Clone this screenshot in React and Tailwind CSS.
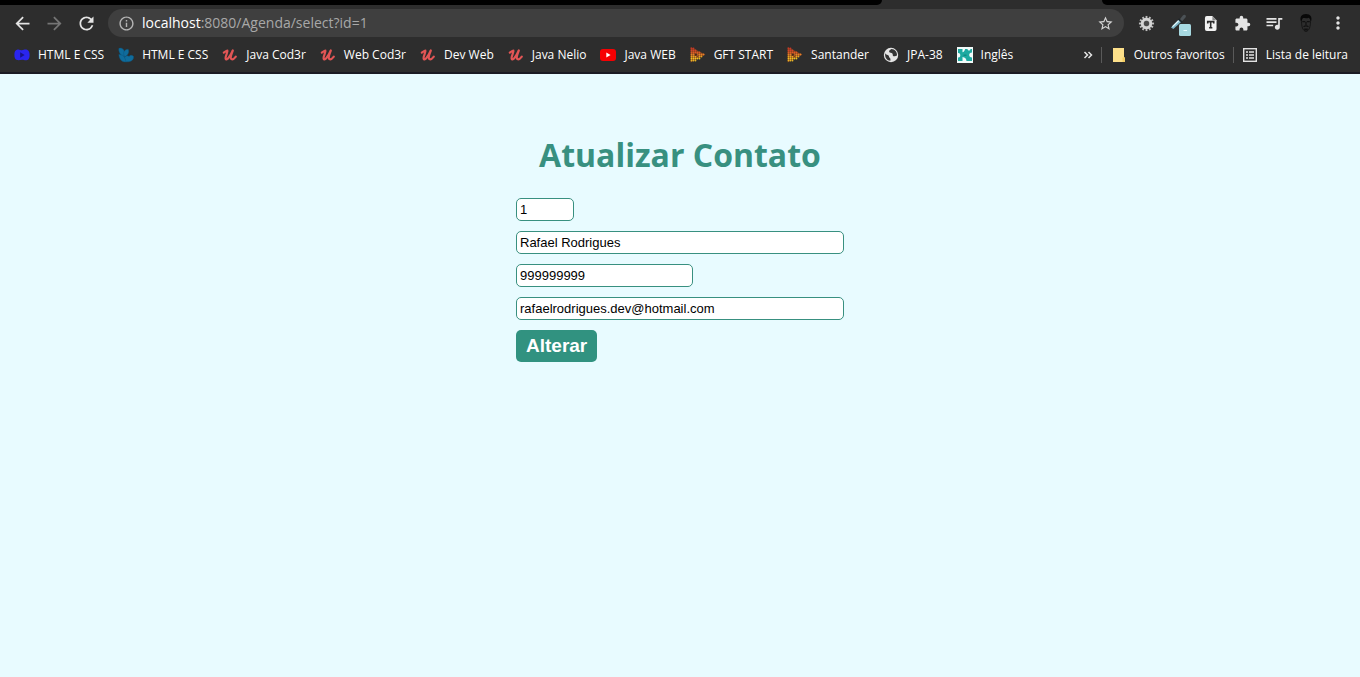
import { useState } from "react";
import {
  MdArrowBack,
  MdArrowForward,
  MdRefresh,
  MdInfoOutline,
  MdStarBorder,
  MdExtension,
  MdQueueMusic,
  MdMoreVert,
} from "react-icons/md";

function PlayBlob() {
  return (
    <svg viewBox="0 0 16 16" className="size-4">
      <path d="M3.500 2.500C5 2 6.500 3.200 8 3.200S11 2 13 2.700c2 .8 2.600 2.500 2.600 5.300s-.6 4.800-3 5.300c-1.600.3-3-.6-4.600-.6s-3 .8-4.800.4C1 12.500.4 10.700.4 8S.8 3.200 3.500 2.500z" fill="#2a25ee" />
      <path d="M6.200 5.200 10.600 8l-4.400 2.800z" fill="#17128a" />
    </svg>
  );
}

function Leaves() {
  return (
    <svg viewBox="0 0 16 16" className="size-4">
      <g fill="#0f6c9c" stroke="#0b5580" strokeWidth=".4">
        <path d="M.8 1.500C3 .4 5 1.400 6 3.600c.6 1.800.6 4-.2 6.200C2.800 8.800.4 5 .8 1.500z" />
        <path d="M5.600 6C6 3.800 7.500 2.200 10.200 2.200c1.200 2.600.4 5.600-3.800 8z" />
        <path d="M.8 7.500c4 0 6.500 2 7.700 7.300-4.300.8-7.200-2.300-7.700-7.300z" />
        <path d="M6.600 10.500C8.500 7.500 10.500 9 11 9.500c1-1.500 3-1.800 4.500-.2.700 3-2 6-7.400 5.500z" />
      </g>
    </svg>
  );
}

function Script() {
  return (
    <svg viewBox="0 0 16 16" className="size-4" fill="none" strokeLinecap="round" strokeLinejoin="round">
      <path d="M1.800 5.600C3.200 4.600 4.600 3.400 5.400 3.500 6.200 4.400 3 9.400 3.600 11.600c.7 2.200 3.900-.6 7.200-8.100C9 8 8 11.200 9.400 12.100c1.400.7 3.200-.8 4.400-2.400" stroke="#e25555" strokeWidth="2.200" />
    </svg>
  );
}

function Tube() {
  return (
    <svg viewBox="0 0 16 16" className="size-4">
      <rect x="0" y="2" width="16" height="12" rx="3" fill="#f60002" />
      <path d="M6.300 5.500 10.600 8l-4.300 2.500z" fill="#fff" />
    </svg>
  );
}

const dotRows = [
  { y: 1.5, xs: [1.5, 3.5], color: "#c73728" },
  { y: 3.5, xs: [1.5, 3.5, 5.5], color: "#d2432a" },
  { y: 5.5, xs: [1.5, 3.5, 5.5, 7.5, 9.5], color: "#dc5826" },
  { y: 7.5, xs: [1.5, 3.5, 7.5, 9.5, 11.5, 13.5], color: "#e4802a" },
  { y: 9.5, xs: [1.5, 3.5, 5.5, 9.5, 11.5], color: "#e8a522" },
  { y: 11.5, xs: [1.5, 3.5, 5.5, 7.5, 9.5], color: "#eec022" },
  { y: 13.5, xs: [1.5, 3.5, 5.5], color: "#e8b426" },
];

function DottedPlay() {
  return (
    <svg viewBox="0 0 16 16" className="size-4">
      <path d="M.6 0 15.400 7.600.6 15.400z" fill="#80401e" />
      {dotRows.map(({ y, xs, color }) =>
        xs.map((x) => <circle key={`${x}-${y}`} cx={x} cy={y} r=".9" fill={color} />)
      )}
      <path d="M5 6.500 8 7.800 5 9z" fill="#46281c" />
    </svg>
  );
}

function Globe() {
  return (
    <svg viewBox="0 0 16 16" className="size-4">
      <circle cx="8" cy="8" r="7.200" fill="#e4e4e4" />
      <path d="M2.300 6.300c.8 1.500 2.300 1.600 3.200 2.200.8.700.2 1.500.9 2.100.8.600 1.300 1.300 1 3.200-3.300-.1-6-3.200-5.100-7.500zM8.400 2c-1.500.9-2.600 1.700-2.200 3 .5 1.200 2.300.5 3.200 1.500.8.900-.2 2 1 2.700 1.400.6 2.500-.6 3.600-.7C14.300 5 11.900 2 8.400 2z" fill="#343434" />
    </svg>
  );
}

function Puzzle() {
  return (
    <svg viewBox="0 0 16 16" className="size-4">
      <rect width="16" height="16" fill="#f2fbfa" />
      <path d="M1 2h4.500v3.300c1.200-.2 2.200-1.300 2.600-3.300h2.400c.2 1 .7 1.600 1.500 1.600s1.300-.6 1.500-1.600H15v3.500c-1.800.2-2.800 1.200-2.800 2.500s1 2.300 2.800 2.500V14H9.500c-.2-2-1.300-3.500-4-3.900V14H1v-3.500c1.300.3 2.300-.6 2.300-2.200S2.300 5.800 1 6z" fill="#1eaaa1" />
      <path d="M6.500 8.200h3" stroke="#0f857d" strokeWidth="1.200" />
    </svg>
  );
}

function Gear() {
  return (
    <svg viewBox="0 0 18 18" className="size-[17px]">
      <g fill="#bdbdbd">
        {[0, 30, 60, 90, 120, 150].map((a) => (
          <rect key={a} x="8" y="1" width="2" height="16" transform={`rotate(${a} 9 9)`} />
        ))}
      </g>
      <circle cx="9" cy="9" r="4.600" fill="none" stroke="#d5d5d5" strokeWidth="2.800" />
      <circle cx="9" cy="9" r="2.800" fill="#4a4a4a" />
    </svg>
  );
}

function Picker() {
  return (
    <svg viewBox="0 0 22 24" className="mt-1 ml-1.5 h-6 w-[22px] shrink-0">
      <path d="M9 7.500 12.800 2.500c1-1 2.700-.9 3 .2.300.8-.1 1.500-.8 2.200L11 9.500z" fill="#4b5155" />
      <path d="m8.500 5.800 3.700 3.500" stroke="#20272b" strokeWidth="1.600" />
      <path d="M1 14.500 8.300 7l2.500 2.300L3.300 16z" fill="#7fb8ca" />
      <path d="M2.500 13.600 8.600 7.700" stroke="#e4f7fb" strokeWidth="1.200" />
      <rect x="9" y="11" width="12" height="12" rx="1.500" fill="#a7d9e1" />
      <path d="M13.500 17.500h3.500" stroke="#e6fbff" strokeWidth="1" />
    </svg>
  );
}

function TextFile() {
  return (
    <svg viewBox="0 0 14 18" className="h-[17px] w-[13px]">
      <path d="M3 1h6l4.500 4.500V15a2 2 0 0 1-2 2H3a2 2 0 0 1-2-2V3a2 2 0 0 1 2-2z" fill="#f2f2f2" />
      <path d="M9 1v4.500h4.500z" fill="#8b8b8b" />
      <path d="M4 9V7h6.500v2M7.200 7v6.500M5.500 13.500H9" fill="none" stroke="#2b2b2b" strokeWidth="1.700" />
    </svg>
  );
}

function Face() {
  return (
    <svg viewBox="0 0 16 20" className="h-5 w-4">
      <path d="M2.800 8C1.700 4 3.500 1 8 1s6.300 3 5.200 7l-.8 1c.1-2.300-.5-3.600-1.700-4.300C8.500 5.700 6.300 5 5.100 5 4 6 3.700 7 3.600 9z" fill="#080808" />
      <path d="M3.500 8.500C3.500 13 4.600 17.800 8 18.500c3.400-.7 4.500-5.500 4.500-10" fill="none" stroke="#151515" strokeWidth="1" />
      <path d="M4.300 8.700h3M8.800 8.700h3M8 9v3M5.500 13.700c1.500-1 3.500-1 5 0" fill="none" stroke="#111" strokeWidth="1.200" />
      <path d="M6.200 15.500h3.600v2H6.200z" fill="#111" />
    </svg>
  );
}

function ReadingList() {
  return (
    <svg viewBox="0 0 16 16" className="size-4" fill="none" stroke="#e2e2e2">
      <rect x="1.700" y="1.700" width="12.600" height="12.600" strokeWidth="1.400" />
      <path d="M4 5h2M7 5h5M4 8h2M7 8h5M4 11h2M7 11h5" strokeWidth="1.600" />
    </svg>
  );
}

function Folder() {
  return (
    <svg viewBox="0 0 14 16" className="h-4 w-3.5">
      <path d="M1 1h11v9.500h1V15H1z" fill="#fde08a" />
      <path d="M10.500 15v-4.500H13V15z" fill="#f3cd62" />
    </svg>
  );
}

const bookmarks = [
  { label: "HTML E CSS", Icon: PlayBlob },
  { label: "HTML E CSS", Icon: Leaves },
  { label: "Java Cod3r", Icon: Script },
  { label: "Web Cod3r", Icon: Script },
  { label: "Dev Web", Icon: Script },
  { label: "Java Nelio", Icon: Script },
  { label: "Java WEB", Icon: Tube },
  { label: "GFT START", Icon: DottedPlay },
  { label: "Santander", Icon: DottedPlay },
  { label: "JPA-38", Icon: Globe },
  { label: "Inglês", Icon: Puzzle },
];

function ToolButton({ label, children }) {
  return (
    <button type="button" aria-label={label} className="flex h-7 w-8 shrink-0 items-center justify-center text-[#e4e4e4]">
      {children}
    </button>
  );
}

function Browser() {
  const [url, setUrl] = useState("localhost:8080/Agenda/select?id=1");
  const [, host, path] = url.match(/^([^:/]*)(.*)$/);
  return (
    <header className="border-b-2 border-[#1b1b24] bg-[#2d2d2d] font-['Open_Sans',sans-serif] text-white">
      <div className="flex h-[5px]">
        <div className="flex-1 rounded-br-md bg-black" />
        <div className="w-[220px]" />
        <div className="w-[258px] rounded-bl-md bg-black" />
      </div>
      <div className="flex items-center gap-1.5 px-1.5 pt-1">
        <div className="flex">
          <ToolButton label="Voltar"><MdArrowBack size={21} /></ToolButton>
          <ToolButton label="Avançar"><MdArrowForward size={21} color="#757575" /></ToolButton>
          <ToolButton label="Recarregar"><MdRefresh size={21} /></ToolButton>
        </div>
        <div className="flex h-7 min-w-0 flex-1 items-center rounded-full bg-[#3f3f3f] px-2.5">
          <MdInfoOutline size={17} color="#b5b5b5" className="shrink-0" />
          <div className="relative ml-[7px] h-5 min-w-0 flex-1 text-sm leading-5">
            <div aria-hidden="true" className="overflow-hidden whitespace-nowrap text-[#a8a8a8]">
              <span className="text-white">{host}</span>
              {path}
            </div>
            <input
              aria-label="Endereço"
              value={url}
              onChange={(e) => setUrl(e.target.value)}
              className="absolute inset-0 w-full bg-transparent text-transparent caret-white outline-none"
            />
          </div>
          <button type="button" aria-label="Adicionar aos favoritos" className="text-[#d4d4d4]">
            <MdStarBorder size={17} />
          </button>
        </div>
        <div className="flex">
          <ToolButton label="Configurações"><Gear /></ToolButton>
          <ToolButton label="Seletor de cores"><Picker /></ToolButton>
          <ToolButton label="Texto"><TextFile /></ToolButton>
          <ToolButton label="Extensões"><MdExtension size={17} /></ToolButton>
          <ToolButton label="Mídia"><MdQueueMusic size={20} /></ToolButton>
          <ToolButton label="Perfil"><Face /></ToolButton>
          <ToolButton label="Menu"><MdMoreVert size={20} /></ToolButton>
        </div>
      </div>
      <nav className="flex h-[35px] items-center pr-3 pl-3.5 text-xs whitespace-nowrap">
        <div className="flex min-w-0 flex-1 gap-3.5 overflow-hidden">
          {bookmarks.map(({ label, Icon }, i) => (
            <a key={i} href="#" className="flex shrink-0 items-center gap-2">
              <Icon />
              {label}
            </a>
          ))}
        </div>
        <button type="button" aria-label="Mais favoritos" className="mr-2 shrink-0">
          <svg viewBox="0 0 10 8" className="h-2 w-2.5" fill="none" stroke="#e4e4e4" strokeWidth="1.500">
            <path d="m1.500 1 3 3-3 3M5.500 1l3 3-3 3" />
          </svg>
        </button>
        <span className="h-4 w-px bg-[#5a5a5a]" />
        <a href="#" className="ml-2.5 flex items-center gap-2"><Folder />Outros favoritos</a>
        <span className="ml-2 h-4 w-px bg-[#5a5a5a]" />
        <a href="#" className="ml-2 flex items-center gap-2"><ReadingList />Lista de leitura</a>
      </nav>
    </header>
  );
}

const fields = [
  { name: "id", label: "Id", value: "1", size: "w-[58px]", readOnly: true },
  { name: "nome", label: "Nome", value: "Rafael Rodrigues", size: "w-full" },
  { name: "fone", label: "Fone", value: "999999999", size: "w-[177px]" },
  { name: "email", label: "E-mail", value: "rafaelrodrigues.dev@hotmail.com", size: "w-full" },
];

export default function App() {
  return (
    <div className="flex min-h-screen flex-col bg-[#e8fbff]">
      <Browser />
      <main className="flex flex-1 flex-col items-center px-4 pt-[60px]">
        <h1 className="font-['Open_Sans',sans-serif] text-[32px] leading-[42px] font-bold text-[#389080]">
          Atualizar Contato
        </h1>
        <form
          onSubmit={(e) => e.preventDefault()}
          className="mt-[22px] flex w-full max-w-[328px] flex-col items-start gap-2.5 font-['Liberation_Sans',Arial,sans-serif]"
        >
          {fields.map((f) => (
            <input
              key={f.name}
              name={f.name}
              aria-label={f.label}
              defaultValue={f.value}
              readOnly={f.readOnly}
              className={`${f.size} h-[23px] rounded-[5px] border border-[#389080] bg-white px-[3px] text-[13px] text-black`}
            />
          ))}
          <button type="submit" className="h-8 rounded-[5px] bg-[#319280] px-2.5 text-[19px] leading-8 font-bold text-white">
            Alterar
          </button>
        </form>
      </main>
    </div>
  );
}
